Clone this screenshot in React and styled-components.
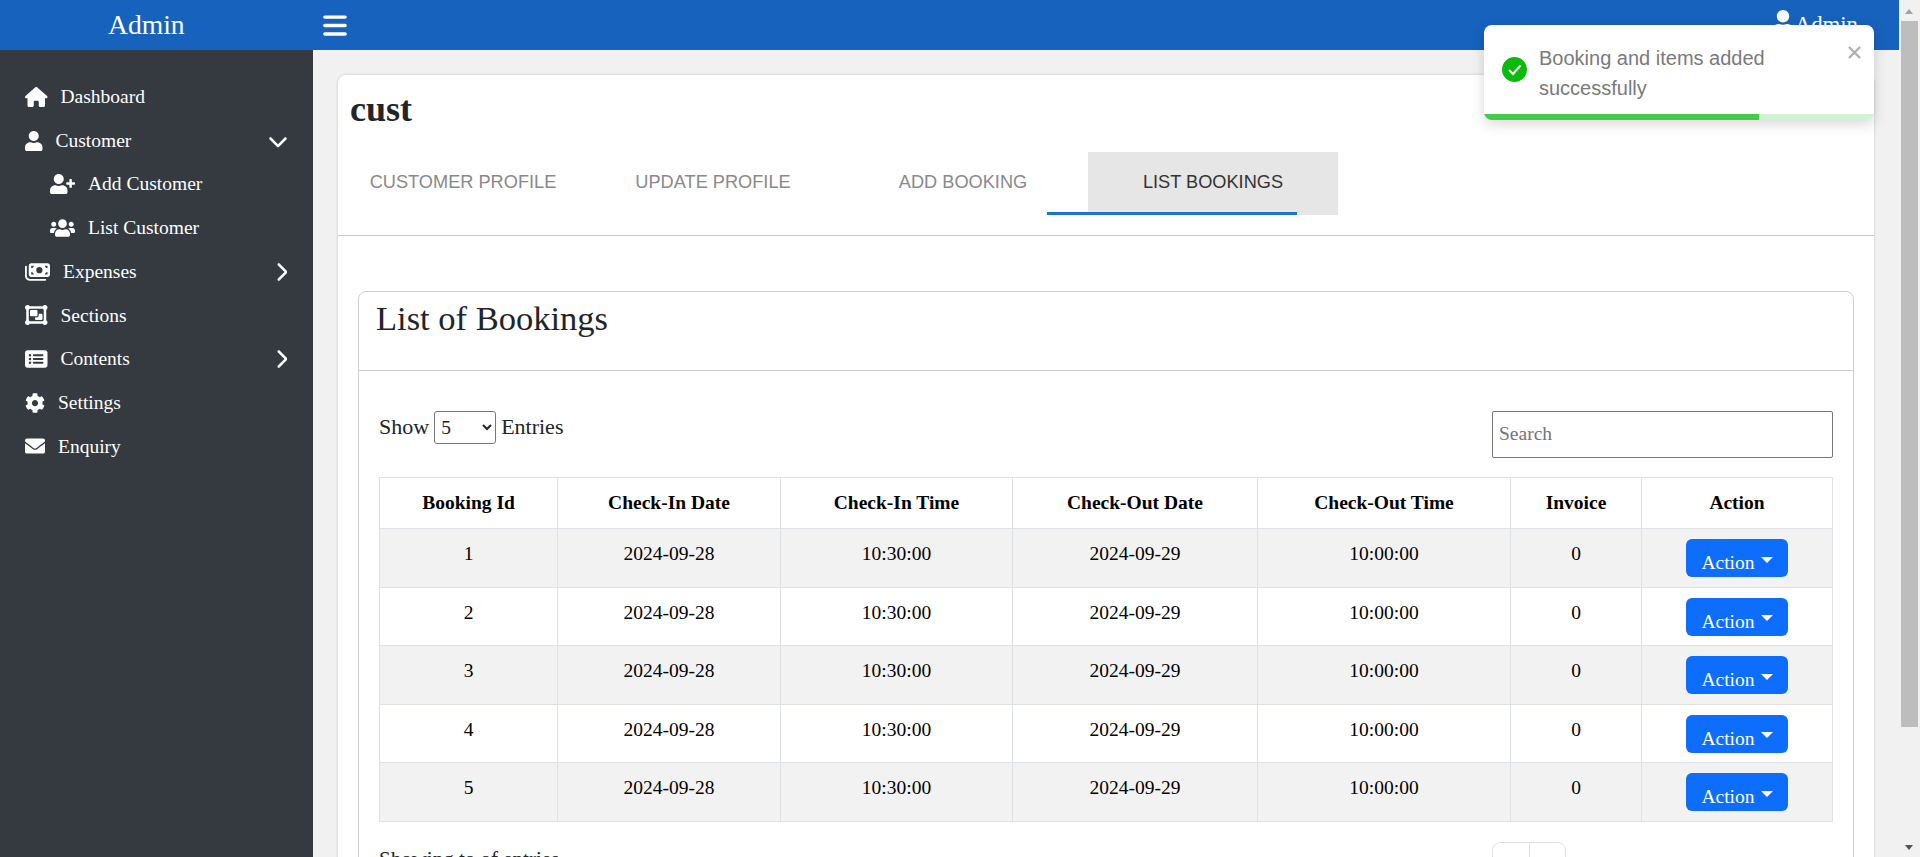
import React from 'react';
import styled, { createGlobalStyle } from 'styled-components';
import { FaCog, FaEnvelope, FaUser, FaUserPlus, FaUsers } from 'react-icons/fa';
import {
	FaBars,
	FaChevronDown,
	FaChevronRight,
	FaHouse,
	FaMoneyBills,
	FaObjectGroup,
	FaRectangleList,
} from 'react-icons/fa6';

const serif = '"Liberation Serif", "Times New Roman", serif';
const sans = '"Liberation Sans", Arial, sans-serif';

const GlobalStyle = createGlobalStyle`
	html, body {
		margin: 0;
		height: 100%;
		overflow: hidden;
	}
	body {
		font-family: ${serif};
		font-size: 19.5px;
		color: #212529;
	}
	* {
		box-sizing: border-box;
	}
`;

const Shell = styled.div`
	display: flex;
	height: 100vh;
	overflow: hidden;
`;

const Main = styled.div`
	flex: 1;
	min-width: 0;
	display: flex;
	flex-direction: column;
`;

const TopBar = styled.header`
	flex: none;
	height: 50px;
	display: flex;
	align-items: center;
	background: #1762bd;
	color: #fff;
`;

const Brand = styled.div`
	width: 313px;
	padding-left: 108px;
	font-size: 27.6px;
	line-height: 50px;
`;

const MenuButton = styled.button`
	display: flex;
	padding: 0;
	margin-left: 10px;
	border: 0;
	background: none;
	color: #fff;

	svg {
		width: 24px;
		height: 27px;
	}
`;

const UserMenu = styled.div`
	display: flex;
	align-items: flex-start;
	gap: 1px;
	margin-left: auto;
	padding-right: 41px;
	height: 50px;
	font-size: 22.8px;
	line-height: 50px;

	svg {
		width: 22px;
		height: 25px;
		margin-top: 10px;
	}
`;

const Body = styled.div`
	flex: 1;
	min-height: 0;
	display: flex;
`;

const Sidebar = styled.nav`
	flex: none;
	width: 313px;
	padding-top: 25px;
	background: #343a40;
	color: #fff;
`;

const NavRow = styled.div`
	display: flex;
	align-items: center;
	gap: 13px;
	height: 43.7px;
	padding-left: ${({ $sub }) => ($sub ? '50px' : '25px')};
	padding-right: 26px;
	line-height: 1;
`;

const NavIcon = styled.span`
	display: flex;
	flex: none;
	width: ${({ $width }) => $width}px;

	svg {
		display: block;
		width: 100%;
		height: 20px;
	}
`;

const NavCaret = styled.span`
	display: flex;
	margin-left: auto;
	margin-right: ${({ $open }) => ($open ? '-1px' : '0')};

	svg {
		display: block;
		width: ${({ $open }) => ($open ? '20px' : '12.5px')};
		height: 20px;
	}
`;

const Content = styled.main`
	flex: 1;
	min-width: 0;
	padding: 25px 25px 0;
	background: #f1f1f1;
	overflow: hidden;
`;

const Card = styled.section`
	background: #fff;
	border-radius: 8px 8px 0 0;
	box-shadow: 0 0 3px rgba(0, 0, 0, 0.2);
	padding-bottom: 40px;
`;

const CustomerName = styled.h3`
	margin: 0;
	height: 77px;
	padding: 12px 12px 0;
	font-size: 36px;
	font-weight: 700;
	line-height: 44px;
`;

const Tabs = styled.div`
	position: relative;
	display: flex;
	height: 84px;
	border-bottom: 1px solid #c8c8c8;
`;

const Tab = styled.div`
	width: 250px;
	height: 63px;
	display: flex;
	align-items: center;
	justify-content: center;
	font-family: ${sans};
	font-size: 18.2px;
	color: ${({ $active }) => ($active ? '#333' : '#8a8a8a')};
	background: ${({ $active }) => ($active ? '#e6e6e6' : 'transparent')};
	padding-bottom: 3px;
`;

const TabIndicator = styled.span`
	position: absolute;
	left: 709px;
	top: 60px;
	width: 250px;
	height: 3px;
	background: #1976d2;
`;

const Panel = styled.div`
	margin: 55px 20px 0;
	border: 1px solid #cfcfcf;
	border-radius: 8px;
`;

const PanelHeader = styled.div`
	height: 79px;
	padding: 4px 17px 0;
	border-bottom: 1px solid #cfcfcf;
`;

const PanelTitle = styled.h2`
	margin: 0;
	font-size: 34.5px;
	font-weight: 400;
	line-height: 45px;
`;

const PanelBody = styled.div`
	padding: 40px 20px 20px;
`;

const Toolbar = styled.div`
	display: flex;
	justify-content: space-between;
	align-items: flex-start;
	margin-bottom: 19px;
`;

const EntriesLabel = styled.label`
	display: flex;
	align-items: center;
	gap: 5px;
	height: 32px;
	font-size: 22px;
	line-height: 32px;
`;

const EntriesSelect = styled.select`
	width: 62px;
	height: 33px;
	padding: 0 0 0 2px;
	font-family: ${serif};
	font-size: 19.5px;
	background: #fff;
	color: #212529;
	border: 1px solid #767676;
	border-radius: 3px;
`;

const SearchInput = styled.input`
	width: 341px;
	height: 47px;
	padding: 0 6px 2px;
	font-family: ${serif};
	font-size: 19.5px;
	border: 1px solid #767676;
	border-radius: 2px;

	&::placeholder {
		color: #757575;
	}
`;

const BookingTable = styled.table`
	width: 1453px;
	table-layout: fixed;
	border-collapse: collapse;
	color: #000;
`;

const HeadCell = styled.th`
	height: 51px;
	padding: 0;
	border: 1px solid #dee2e6;
	font-weight: 700;
	text-align: center;
`;

const Row = styled.tr`
	height: 58.6px;
	background: ${({ $striped }) => ($striped ? '#f2f2f2' : '#fff')};
`;

const Cell = styled.td`
	padding: 10px 0 0;
	border: 1px solid #dee2e6;
	text-align: center;
	vertical-align: top;
	line-height: 29px;
`;

const ActionButton = styled.button`
	display: inline-flex;
	align-items: flex-end;
	justify-content: center;
	gap: 6px;
	width: 102px;
	height: 38px;
	padding: 0;
	border: 0;
	border-radius: 6px;
	background: #0d6efd;
	color: #fff;
	font-family: ${serif};
	font-size: 19.5px;
	line-height: 29px;

	&::after {
		content: '';
		align-self: center;
		margin-top: 3px;
		border-top: 6px solid #fff;
		border-left: 6px solid transparent;
		border-right: 6px solid transparent;
	}
`;

const Footer = styled.div`
	display: flex;
	justify-content: space-between;
	margin-top: 20px;
`;

const Summary = styled.div`
	padding-top: 3px;
	font-size: 21px;
	line-height: 29px;
`;

const PagerWrap = styled.div`
	width: 341px;
`;

const Pager = styled.div`
	display: flex;
	width: 74px;
	height: 40px;
	border: 1px solid #dee2e6;
	border-radius: 8px;
`;

const PagerCell = styled.span`
	flex: 1;

	& + & {
		border-left: 1px solid #dee2e6;
	}
`;

const Toast = styled.div`
	position: absolute;
	top: 25px;
	left: 1484px;
	width: 390px;
	height: 95px;
	overflow: hidden;
	border-radius: 8px;
	background: #fff;
	box-shadow: 0 4px 14px rgba(0, 0, 0, 0.16);
	font-family: ${sans};
	font-size: 20px;
	line-height: 30px;
	color: #7a7a7a;
`;

const ToastBody = styled.div`
	display: flex;
	align-items: center;
	gap: 12px;
	height: 89px;
	padding: 6px 50px 0 18px;

	svg {
		flex: none;
		margin-top: -6px;
	}
`;

const ToastClose = styled.svg`
	position: absolute;
	top: 21px;
	right: 13px;
	width: 13px;
	height: 13px;
`;

const ToastTrack = styled.div`
	height: 6px;
	background: #cdf3d0;
`;

const ToastProgress = styled.div`
	height: 100%;
	background: #43cb4b;
`;

const Scrollbar = styled.div`
	flex: none;
	position: relative;
	width: 21px;
	background: #f1f1f1;
`;

const ScrollThumb = styled.div`
	position: absolute;
	top: 21px;
	left: 2px;
	width: 17px;
	height: 706px;
	background: #bdbdbd;
`;

const ScrollArrow = styled.span`
	position: absolute;
	left: 6px;
	${({ $down }) => ($down ? 'bottom: 7px;' : 'top: 9px;')}
	border-left: 4.5px solid transparent;
	border-right: 4.5px solid transparent;
	${({ $down }) =>
		$down ? 'border-top: 5px solid #505050;' : 'border-bottom: 5px solid #a3a3a3;'}
`;

const navItems = [
	{ label: 'Dashboard', icon: FaHouse, width: 22.5 },
	{ label: 'Customer', icon: FaUser, width: 17.5, caret: 'open' },
	{ label: 'Add Customer', icon: FaUserPlus, width: 25, sub: true },
	{ label: 'List Customer', icon: FaUsers, width: 25, sub: true },
	{ label: 'Expenses', icon: FaMoneyBills, width: 25, caret: 'closed' },
	{ label: 'Sections', icon: FaObjectGroup, width: 22.5 },
	{ label: 'Contents', icon: FaRectangleList, width: 22.5, caret: 'closed' },
	{ label: 'Settings', icon: FaCog, width: 20 },
	{ label: 'Enquiry', icon: FaEnvelope, width: 20 },
];

const tabs = ['CUSTOMER PROFILE', 'UPDATE PROFILE', 'ADD BOOKING', 'LIST BOOKINGS'];

const columns = [
	['Booking Id', 178],
	['Check-In Date', 223],
	['Check-In Time', 232],
	['Check-Out Date', 245],
	['Check-Out Time', 253],
	['Invoice', 131],
	['Action', 191],
];

const bookings = [1, 2, 3, 4, 5];

export default function App() {
	return (
		<Shell>
			<GlobalStyle />
			<Main>
				<TopBar>
					<Brand>Admin</Brand>
					<MenuButton type="button" aria-label="Toggle menu">
						<FaBars />
					</MenuButton>
					<UserMenu>
						<FaUser />
						Admin
					</UserMenu>
				</TopBar>
				<Body>
					<Sidebar>
						{navItems.map(({ label, icon: Icon, width, sub, caret }) => (
							<NavRow key={label} $sub={sub}>
								<NavIcon $width={width}>
									<Icon />
								</NavIcon>
								{label}
								{caret && (
									<NavCaret $open={caret === 'open'}>
										{caret === 'open' ? <FaChevronDown /> : <FaChevronRight />}
									</NavCaret>
								)}
							</NavRow>
						))}
					</Sidebar>
					<Content>
						<Card>
							<CustomerName>cust</CustomerName>
							<Tabs>
								{tabs.map((tab, i) => (
									<Tab key={tab} $active={i === 3}>
										{tab}
									</Tab>
								))}
								<TabIndicator />
							</Tabs>
							<Panel>
								<PanelHeader>
									<PanelTitle>List of Bookings</PanelTitle>
								</PanelHeader>
								<PanelBody>
									<Toolbar>
										<EntriesLabel>
											Show
											<EntriesSelect defaultValue="5">
												<option value="5">5</option>
												<option value="10">10</option>
												<option value="25">25</option>
											</EntriesSelect>
											Entries
										</EntriesLabel>
										<SearchInput placeholder="Search" />
									</Toolbar>
									<BookingTable>
										<colgroup>
											{columns.map(([name, width]) => (
												<col key={name} width={width} />
											))}
										</colgroup>
										<thead>
											<tr>
												{columns.map(([name]) => (
													<HeadCell key={name}>{name}</HeadCell>
												))}
											</tr>
										</thead>
										<tbody>
											{bookings.map(id => (
												<Row key={id} $striped={id % 2 === 1}>
													<Cell>{id}</Cell>
													<Cell>2024-09-28</Cell>
													<Cell>10:30:00</Cell>
													<Cell>2024-09-29</Cell>
													<Cell>10:00:00</Cell>
													<Cell>0</Cell>
													<Cell>
														<ActionButton type="button">Action</ActionButton>
													</Cell>
												</Row>
											))}
										</tbody>
									</BookingTable>
									<Footer>
										<Summary>Showing to of entries</Summary>
										<PagerWrap>
											<Pager>
												<PagerCell />
												<PagerCell />
											</Pager>
										</PagerWrap>
									</Footer>
								</PanelBody>
							</Panel>
						</Card>
					</Content>
				</Body>
			</Main>
			<Scrollbar aria-hidden="true">
				<ScrollArrow />
				<ScrollThumb />
				<ScrollArrow $down />
			</Scrollbar>
			<Toast role="alert">
				<ToastBody>
					<svg width="25" height="25" viewBox="0 0 25 25">
						<circle cx="12.5" cy="12.5" r="12.5" fill="#0abb0e" />
						<path d="M7 13l4 4 7.5-8.5" fill="none" stroke="#fff" strokeWidth="2" />
					</svg>
					<span>Booking and items added successfully</span>
				</ToastBody>
				<ToastClose viewBox="0 0 13 13">
					<path d="M1 1l11 11M12 1L1 12" stroke="#b0b0b0" strokeWidth="2.4" fill="none" />
				</ToastClose>
				<ToastTrack>
					<ToastProgress style={{ width: '70.5%' }} />
				</ToastTrack>
			</Toast>
		</Shell>
	);
}
